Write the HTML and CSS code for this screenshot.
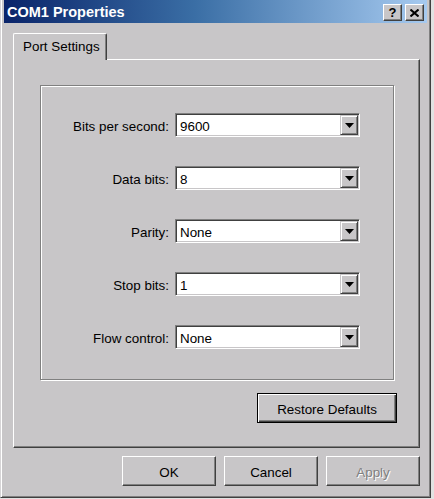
FILE: index.html
```html
<!DOCTYPE html>
<html>
<head>
<meta charset="utf-8">
<title>COM1 Properties</title>
<link rel="stylesheet" href="styles.css">
</head>
<body>
<div class="window">
  <div class="titlebar">
    <span class="title">COM1 Properties</span>
    <div class="caption-btns">
      <span class="cbtn help">?</span>
      <span class="cbtn close"><svg width="9" height="8" viewBox="0 0 9 8"><path d="M0.5 0.5 L8.5 7.5 M8.5 0.5 L0.5 7.5" stroke="#000" stroke-width="2" fill="none"/></svg></span>
    </div>
  </div>
  <div class="client">
    <div class="tabs"><div class="tab">Port Settings</div></div>
    <div class="panel">
      <div class="group">
        <div class="row"><span class="label">Bits per second:</span><div class="combo"><span class="val">9600</span><span class="drop"><svg width="9" height="5" viewBox="0 0 9 5"><polygon points="0,0 9,0 4.5,5" fill="#000"/></svg></span></div></div>
        <div class="row"><span class="label">Data bits:</span><div class="combo"><span class="val">8</span><span class="drop"><svg width="9" height="5" viewBox="0 0 9 5"><polygon points="0,0 9,0 4.5,5" fill="#000"/></svg></span></div></div>
        <div class="row"><span class="label">Parity:</span><div class="combo"><span class="val">None</span><span class="drop"><svg width="9" height="5" viewBox="0 0 9 5"><polygon points="0,0 9,0 4.5,5" fill="#000"/></svg></span></div></div>
        <div class="row"><span class="label">Stop bits:</span><div class="combo"><span class="val">1</span><span class="drop"><svg width="9" height="5" viewBox="0 0 9 5"><polygon points="0,0 9,0 4.5,5" fill="#000"/></svg></span></div></div>
        <div class="row"><span class="label">Flow control:</span><div class="combo"><span class="val">None</span><span class="drop"><svg width="9" height="5" viewBox="0 0 9 5"><polygon points="0,0 9,0 4.5,5" fill="#000"/></svg></span></div></div>
      </div>
      <div class="restore-row"><button class="btn default">Restore Defaults</button></div>
    </div>
    <div class="footer">
      <button class="btn">OK</button>
      <button class="btn">Cancel</button>
      <button class="btn disabled">Apply</button>
    </div>
  </div>
</div>
</body>
</html>
```
FILE: styles.css
```css
html, body {
  margin: 0;
  padding: 0;
}
body {
  background: #e2e2e2;
  font-family: "Liberation Sans", Arial, sans-serif;
  font-size: 13.4px;
  color: #000;
}
.window {
  width: 431px;
  height: 498px;
  box-sizing: border-box;
  background: #c8c6c8;
  border-left: 1px solid #d6d4d6;
  border-right: 1px solid #404040;
  border-bottom: 1px solid #404040;
  box-shadow: inset 1px 0 0 #ffffff, inset -1px -1px 0 #808080;
  padding: 0 3px;
}
.titlebar {
  height: 23px;
  display: flex;
  align-items: center;
  justify-content: space-between;
  padding: 0 3px;
  background: linear-gradient(to right, #0a246a 0%, #3a6ea5 45%, #a6caf0 100%);
}
.title {
  color: #fff;
  font-weight: bold;
  font-size: 14.5px;
  line-height: 23px;
  padding-top: 2px;
}
.caption-btns {
  display: flex;
  gap: 3px;
  padding-top: 2px;
}
.cbtn {
  width: 19px;
  height: 17px;
  box-sizing: border-box;
  background: #c8c6c8;
  border: 1px solid;
  border-color: #ffffff #404040 #404040 #ffffff;
  box-shadow: inset -1px -1px 0 #808080;
  display: flex;
  align-items: center;
  justify-content: center;
}
.help {
  font-weight: bold;
  font-size: 13px;
  line-height: 1;
  padding-bottom: 1px;
}
.close svg {
  display: block;
}
.tabs {
  display: flex;
  padding-left: 9px;
  margin-top: 10px;
}
.tab {
  position: relative;
  z-index: 1;
  width: 94px;
  height: 27px;
  box-sizing: border-box;
  margin-bottom: -1px;
  background: #c8c6c8;
  border-top: 1px solid #fff;
  border-left: 1px solid #fff;
  border-right: 1px solid #404040;
  border-radius: 2px 2px 0 0;
  box-shadow: inset -1px 0 0 #808080;
  padding-left: 9px;
  display: flex;
  align-items: center;
  padding-bottom: 1px;
}
.panel {
  margin-left: 9px;
  width: 407px;
  height: 389px;
  box-sizing: border-box;
  border-top: 1px solid #fff;
  border-left: 1px solid #fff;
  border-right: 1px solid #404040;
  border-bottom: 1px solid #404040;
  box-shadow: inset -1px -1px 0 #808080;
  padding-top: 25px;
}
.group {
  margin-left: 26px;
  width: 354px;
  height: 295px;
  box-sizing: border-box;
  border: 1px solid #808080;
  box-shadow: inset 1px 1px 0 #fff, 1px 1px 0 #fff;
  padding-top: 27px;
  display: flex;
  flex-direction: column;
  gap: 29px;
}
.row {
  display: flex;
  align-items: center;
  height: 24px;
}
.label {
  width: 128px;
  text-align: right;
  padding-top: 2px;
  margin-right: 6px;
}
.combo {
  width: 185px;
  height: 24px;
  box-sizing: border-box;
  background: #fff;
  border: 1px solid;
  border-color: #808080 #ffffff #ffffff #808080;
  box-shadow: inset 1px 1px 0 #404040, inset -1px -1px 0 #c8c6c8;
  display: flex;
  align-items: center;
  justify-content: space-between;
  padding: 1px 1px 1px 4px;
}
.val {
  padding-top: 2px;
}
.drop {
  width: 18px;
  height: 20px;
  box-sizing: border-box;
  background: #c8c6c8;
  border: 1px solid;
  border-color: #c8c6c8 #404040 #404040 #c8c6c8;
  box-shadow: inset 1px 1px 0 #fff, inset -1px -1px 0 #808080;
  display: flex;
  align-items: center;
  justify-content: center;
}
.drop svg {
  display: block;
}
.restore-row {
  display: flex;
  justify-content: flex-end;
  padding-right: 22px;
  margin-top: 13px;
}
.btn {
  font-family: "Liberation Sans", Arial, sans-serif;
  font-size: 13.4px;
  color: #000;
  width: 94px;
  height: 30px;
  box-sizing: border-box;
  background: #c8c6c8;
  border: 1px solid;
  border-color: #ffffff #404040 #404040 #ffffff;
  box-shadow: inset -1px -1px 0 #808080;
  border-radius: 0;
  padding: 2px 0 0 0;
  margin: 0;
}
.btn.default {
  width: 140px;
  border: 1px solid #000;
  box-shadow: inset 1px 1px 0 #fff, inset -1px -1px 0 #404040, inset -2px -2px 0 #808080;
}
.btn.disabled {
  color: #808080;
  text-shadow: 1px 1px 0 #fff;
}
.footer {
  display: flex;
  justify-content: flex-end;
  gap: 8px;
  margin-top: 8px;
  padding-right: 7px;
}
```
